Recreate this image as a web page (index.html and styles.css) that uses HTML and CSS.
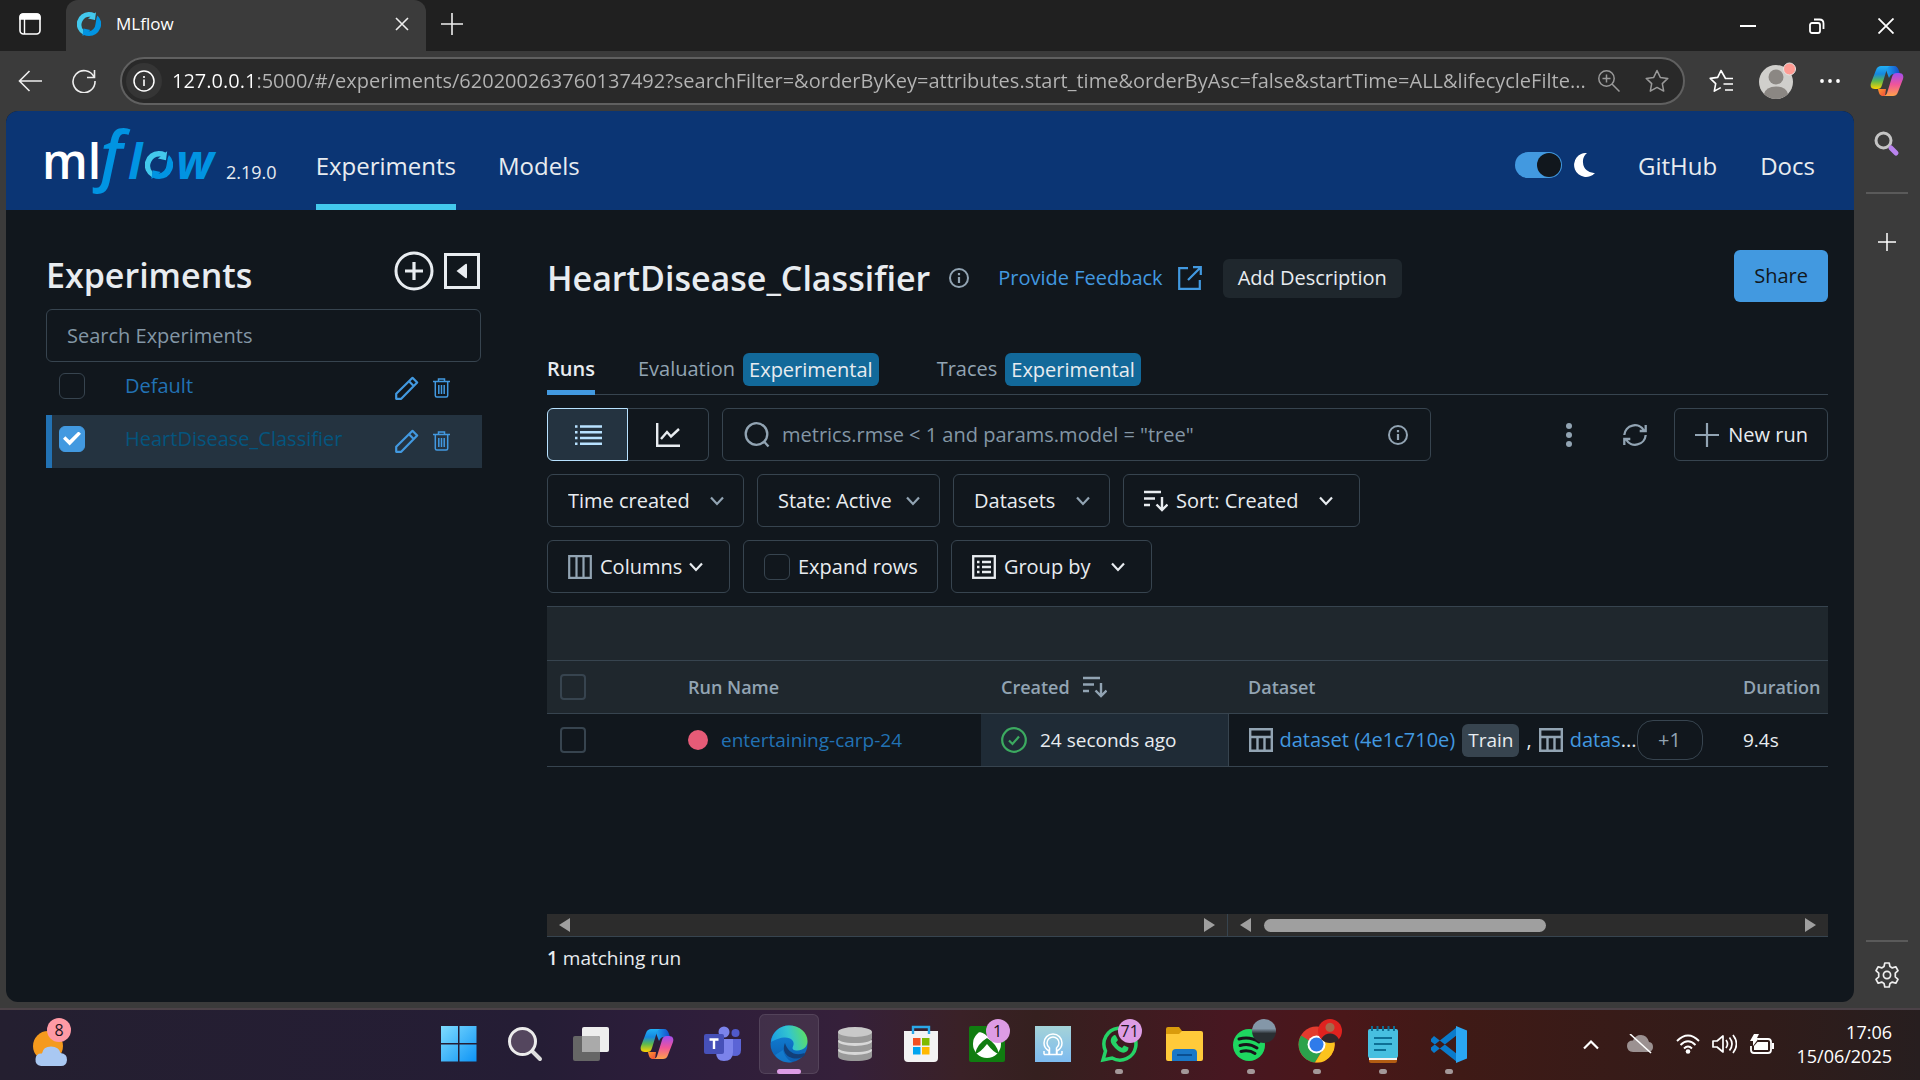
FILE: index.html
```html
<!DOCTYPE html>
<html lang="en">
<head>
<meta charset="utf-8">
<title>MLflow</title>
<link rel="stylesheet" href="styles.css">
</head>
<body>
<svg class="sprite" aria-hidden="true">
  <defs>
    <linearGradient id="copTop" x1="0" y1="0" x2="1" y2="0"><stop offset="0" stop-color="#1ea5f0"/><stop offset="1" stop-color="#1449c8"/></linearGradient>
    <linearGradient id="copLeft" x1="0" y1="0" x2="0" y2="1"><stop offset="0" stop-color="#22b0f5"/><stop offset=".35" stop-color="#1688e0"/><stop offset=".65" stop-color="#5cb84f"/><stop offset="1" stop-color="#ffd400"/></linearGradient>
    <linearGradient id="copRight" x1="0" y1="0" x2="0" y2="1"><stop offset="0" stop-color="#a04df0"/><stop offset=".5" stop-color="#f0559a"/><stop offset="1" stop-color="#ffa24a"/></linearGradient>
    <linearGradient id="copBot" x1="0" y1="0" x2="1" y2="1"><stop offset="0" stop-color="#ff9a2e"/><stop offset="1" stop-color="#f0483c"/></linearGradient>
  </defs>
  <symbol id="i-copilot" viewBox="0 0 34 32">
    <path d="M17 1h7c3 0 4 2 5 5l1 3h-6c-3 0-4 2-5 4l-3-8z" fill="url(#copTop)"/>
    <path d="M11 1h9c-3 1-3 3-4 6l-4 13c-1 3-2 4-5 4H5c-4 0-5-3-4-6L6 5c1-3 3-4 5-4z" fill="url(#copLeft)"/>
    <path d="M8 24h8l-1 7h-2c-3 0-4-2-5-7z" fill="url(#copBot)"/>
    <path d="M23 31h-9c3-1 3-3 4-6l4-13c1-3 2-4 5-4h2c4 0 5 3 4 6l-5 13c-1 3-3 4-5 4z" fill="url(#copRight)"/>
  </symbol>
  <symbol id="i-chev" viewBox="0 0 14 10"><path d="M1 1.500 7 8l6-6.500" fill="none" stroke="currentColor" stroke-width="2.200"/></symbol>
  <symbol id="i-info" viewBox="0 0 22 22"><circle cx="11" cy="11" r="9" fill="none" stroke="currentColor" stroke-width="2"/><path d="M11 10v6M11 6v2.300" stroke="currentColor" stroke-width="2.200"/></symbol>
  <symbol id="i-sort" viewBox="0 0 24 24"><path d="M0 3h17M0 9.500h11M0 16h6M18 8v13M12.500 15.500 18 21l5.500-5.500" fill="none" stroke="currentColor" stroke-width="2.400"/></symbol>
  <symbol id="i-pencil" viewBox="0 0 24 24"><path d="M1.200 22.800v-5L17.500 1.800l4.700 4.700L6.200 22.800zM14 5.300l4.700 4.700" fill="none" stroke="currentColor" stroke-width="2.200" stroke-linejoin="round"/></symbol>
  <symbol id="i-trash" viewBox="0 0 17 20"><path d="M0 3.500h17M5.500 3V1h6v2M2.300 4v13.500q0 1.500 1.500 1.500h9.400q1.500 0 1.500-1.500V4M5.800 7v9M8.500 7v9M11.200 7v9" fill="none" stroke="currentColor" stroke-width="1.500"/></symbol>
  <symbol id="i-table" viewBox="0 0 24 24"><path d="M1.200 1.200h21.600v21.600H1.200zM1 9h22M8.500 9v14M15.500 9v14" fill="none" stroke="currentColor" stroke-width="2.400"/></symbol>
  <symbol id="i-ring" viewBox="0 0 24 24">
    <path d="M6 22.500A12 12 0 0 1 12 0q3 0 5.500 1.200L19 .300l-1 7.700-7-1.500 2.500-1.700A8 8 0 0 0 6.500 18z" fill="#43c9ed"/>
    <path d="M20.500 3.500A12 12 0 0 1 12 24q-3 0-5-1l-1.500 1L6.500 16.500l7 1.500-2 1.500A8 8 0 0 0 18.500 12l1-6z" fill="#0194e2"/>
  </symbol>
</svg>

<div class="tabstrip">
  <button class="plain tabmenu" aria-label="Tab actions"><svg width="22" height="22" viewBox="0 0 22 22"><rect x="1" y="1" width="20" height="20" rx="3.500" fill="none" stroke="#fff" stroke-width="1.600"/><path d="M1 6V4q0-3 3-3h14q3 0 3 3v2zM5.500 6v15" fill="#fff" stroke="#fff" stroke-width="1.400"/></svg></button>
  <div class="tab">
    <svg width="24" height="24"><use href="#i-ring"/></svg>
    <span class="tabname">MLflow</span>
    <button class="plain" aria-label="Close tab"><svg width="14" height="14" viewBox="0 0 14 14"><path d="M1 1l12 12M13 1 1 13" stroke="#eee" stroke-width="1.600"/></svg></button>
  </div>
  <button class="plain newtab" aria-label="New tab"><svg width="22" height="22" viewBox="0 0 22 22"><path d="M11 0v22M0 11h22" stroke="#eee" stroke-width="1.600"/></svg></button>
  <div class="wincontrols">
    <button class="plain" aria-label="Minimize"><svg width="16" height="16" viewBox="0 0 16 16"><path d="M0 8h16" stroke="#fff" stroke-width="2"/></svg></button>
    <button class="plain" aria-label="Restore"><svg width="16" height="16" viewBox="0 0 16 16"><rect x="1" y="5" width="10" height="10" rx="2" fill="none" stroke="#fff" stroke-width="1.800"/><path d="M5 1.500h5.500q4 0 4 4V11" fill="none" stroke="#fff" stroke-width="1.800"/></svg></button>
    <button class="plain" aria-label="Close"><svg width="16" height="16" viewBox="0 0 16 16"><path d="M.5.500l15 15M15.500.500l-15 15" stroke="#fff" stroke-width="1.800"/></svg></button>
  </div>
</div>

<div class="navbar">
  <button class="plain" aria-label="Back"><svg width="24" height="22" viewBox="0 0 24 22"><path d="M24 11H1.500M11.500 1l-10 10 10 10" fill="none" stroke="#eee" stroke-width="1.600"/></svg></button>
  <button class="plain" aria-label="Reload"><svg width="24" height="24" viewBox="0 0 24 24"><path d="M22.500 1v7.500H15M22 8A11 11 0 1 0 23 12" fill="none" stroke="#eee" stroke-width="1.600"/></svg></button>
  <div class="omnibox">
    <button class="plain siteinfo" aria-label="Site information"><svg width="22" height="22" viewBox="0 0 22 22"><circle cx="11" cy="11" r="10" fill="none" stroke="#fff" stroke-width="1.500"/><path d="M11 9.500V16M11 6v2" stroke="#fff" stroke-width="1.600"/></svg></button>
    <input class="url" type="text" aria-label="Address" value="127.0.0.1:5000/#/experiments/620200263760137492?searchFilter=&amp;orderByKey=attributes.start_time&amp;orderByAsc=false&amp;startTime=ALL&amp;lifecycleFilte...">
    <button class="plain" aria-label="Zoom"><svg width="22" height="22" viewBox="0 0 22 22"><circle cx="8.500" cy="8.500" r="7.700" fill="none" stroke="#999" stroke-width="1.500"/><path d="M14 14l7.500 7.500M8.500 4.500v8M4.500 8.500h8" stroke="#999" stroke-width="1.500"/></svg></button>
    <button class="plain" aria-label="Favorite"><svg width="24" height="24" viewBox="0 0 24 24"><path d="M12 1.500l3.300 6.900 7.500 1-5.500 5.200 1.400 7.500-6.700-3.700-6.700 3.700 1.400-7.500L1.200 9.400l7.500-1z" fill="none" stroke="#999" stroke-width="1.500" stroke-linejoin="round"/></svg></button>
  </div>
  <div class="browsertools">
    <button class="plain" aria-label="Favorites"><svg width="25" height="24" viewBox="0 0 25 24"><path d="M24 9.500h-7.500L12 1.500 8.700 8.400l-7.500 1 5.500 5.200-1.400 7.500 6.500-3.500M14.500 15H24M16 21h8" fill="none" stroke="#fff" stroke-width="1.600" stroke-linejoin="round"/></svg></button>
    <button class="plain" aria-label="Profile"><svg width="38" height="38" viewBox="0 0 38 38"><circle cx="18" cy="20" r="17" fill="#d0cfcc"/><circle cx="18" cy="15" r="7.500" fill="#8b8783"/><path d="M6 32q2-7.500 12-7.500T30 32q-5 5-12 5T6 32" fill="#8b8783"/><circle cx="31.500" cy="7" r="6" fill="#ff9b93" stroke="#e8e4e2"/></svg></button>
    <button class="plain" aria-label="More"><svg width="20" height="6" viewBox="0 0 20 6"><g fill="#fff"><circle cx="2" cy="3" r="1.900"/><circle cx="10" cy="3" r="1.900"/><circle cx="18" cy="3" r="1.900"/></g></svg></button>
    <button class="plain" aria-label="Copilot"><svg width="34" height="32"><use href="#i-copilot"/></svg></button>
  </div>
</div>

<div class="window">
  <div class="app">
    <header class="appbar">
      <a class="logo" href="#" aria-label="MLflow home">
        <svg width="173" height="68" viewBox="0 0 173 68">
          <text class="lg-ml" x="-3" y="52">ml</text>
          <text class="lg-f" x="55" y="51">f</text>
          <text class="lg-w" x="83" y="52">l</text>
          <text class="lg-w" x="131" y="52">w</text>
          <svg x="100" y="24" width="28" height="28"><use href="#i-ring"/></svg>
        </svg>
      </a>
      <span class="version">2.19.0</span>
      <nav class="mainnav">
        <a class="active" href="#experiments">Experiments</a>
        <a href="#models">Models</a>
      </nav>
      <div class="appright">
        <label class="theme"><input type="checkbox" checked aria-label="Dark theme"><svg width="21" height="24" viewBox="0 0 21 24"><path d="M13 0A12 12 0 1 0 21 20 11 11 0 0 1 9 9.500 11 11 0 0 1 13 0z" fill="#fff"/></svg></label>
        <a href="#github">GitHub</a>
        <a href="#docs">Docs</a>
      </div>
    </header>
    <div class="appbody">
      <aside class="experiments">
        <div class="exphead">
          <h2>Experiments</h2>
          <button class="plain" aria-label="Create experiment"><svg width="40" height="40" viewBox="0 0 40 40"><circle cx="20" cy="20" r="18" fill="none" stroke="#e8ecf0" stroke-width="3"/><path d="M20 11v18M11 20h18" stroke="#e8ecf0" stroke-width="3.200"/></svg></button>
          <button class="plain" aria-label="Collapse"><svg width="36" height="36" viewBox="0 0 36 36"><rect x="1.500" y="1.500" width="33" height="33" fill="none" stroke="#e8ecf0" stroke-width="3"/><path d="M12.500 18l9-7q1.500-1 1.500 1v12q0 2-1.500 1z" fill="#e8ecf0"/></svg></button>
        </div>
        <input class="expsearch" type="text" placeholder="Search Experiments" aria-label="Search Experiments">
        <ul class="explist">
          <li>
            <input type="checkbox" class="check" aria-label="Select Default">
            <a href="#default">Default</a>
            <button class="plain" aria-label="Rename"><svg width="24" height="24"><use href="#i-pencil"/></svg></button>
            <button class="plain" aria-label="Delete"><svg width="17" height="20"><use href="#i-trash"/></svg></button>
          </li>
          <li class="selected">
            <input type="checkbox" class="check" checked aria-label="Select HeartDisease_Classifier">
            <a href="#heart">HeartDisease_Classifier</a>
            <button class="plain" aria-label="Rename"><svg width="24" height="24"><use href="#i-pencil"/></svg></button>
            <button class="plain" aria-label="Delete"><svg width="17" height="20"><use href="#i-trash"/></svg></button>
          </li>
        </ul>
      </aside>

      <main class="content">
        <div class="titlerow">
          <div class="titleleft">
            <h1>HeartDisease_Classifier</h1>
            <svg class="muted" width="22" height="22"><use href="#i-info"/></svg>
            <a class="feedback" href="#feedback">Provide Feedback <svg width="24" height="24" viewBox="0 0 24 24"><path d="M10 2.200H1.200v20.600h20.600V14M15 1.200h7.800V9M22.500 1.500 10 14" fill="none" stroke="currentColor" stroke-width="2.200"/></svg></a>
            <button class="adddesc">Add Description</button>
          </div>
          <button class="share">Share</button>
        </div>
        <nav class="tabs">
          <a class="on" href="#runs">Runs</a>
          <a href="#evaluation">Evaluation <span class="badge">Experimental</span></a>
          <a href="#traces">Traces <span class="badge">Experimental</span></a>
        </nav>
        <div class="toolbar">
          <div class="tools">
            <div class="segment">
              <button class="on" aria-label="List view"><svg width="28" height="24" viewBox="0 0 28 24"><path d="M6 3.500h22M6 9.300h22M6 15h22M6 20.800h22M1 3.500h2.500M1 9.300h2.500M1 15h2.500M1 20.800h2.500" stroke="currentColor" stroke-width="2.400"/></svg></button>
              <button aria-label="Chart view"><svg width="24" height="24" viewBox="0 0 24 24"><path d="M1.200 0v22.800H24M5 16l6-7 4 4.500L23 6" fill="none" stroke="currentColor" stroke-width="2.400"/></svg></button>
            </div>
            <div class="runsearch">
              <svg class="muted" width="26" height="26" viewBox="0 0 26 26"><circle cx="12.500" cy="12" r="10.800" fill="none" stroke="currentColor" stroke-width="2.300"/><path d="M20 19.500l4.500 5" stroke="currentColor" stroke-width="2.300"/></svg>
              <input type="text" placeholder='metrics.rmse &lt; 1 and params.model = "tree"' aria-label="Search runs">
              <svg class="muted" width="22" height="22"><use href="#i-info"/></svg>
            </div>
            <div class="toolsright">
              <button class="iconbtn" aria-label="More"><svg width="6" height="24" viewBox="0 0 6 24"><g fill="currentColor"><circle cx="3" cy="3" r="3"/><circle cx="3" cy="12" r="3"/><circle cx="3" cy="21" r="3"/></g></svg></button>
              <button class="iconbtn" aria-label="Refresh"><svg width="24" height="24" viewBox="0 0 24 24"><path d="M1.300 12A10.600 10.600 0 0 1 21 7.500M22.700 12A10.600 10.600 0 0 1 3 16.500M22.700 2v6h-6M1.300 22v-6h6" fill="none" stroke="currentColor" stroke-width="2.300"/></svg></button>
              <button class="box newrun"><svg class="muted" width="24" height="24" viewBox="0 0 24 24"><path d="M12 0v24M0 12h24" stroke="currentColor" stroke-width="2.200"/></svg>New run</button>
            </div>
          </div>
          <div class="tools">
            <label class="box"><select aria-label="Time created"><option>Time created</option></select><svg class="muted" width="14" height="10"><use href="#i-chev"/></svg></label>
            <label class="box tight"><select aria-label="State"><option>State: Active</option></select><svg class="muted" width="14" height="10"><use href="#i-chev"/></svg></label>
            <label class="box"><select aria-label="Datasets"><option>Datasets</option></select><svg class="muted" width="14" height="10"><use href="#i-chev"/></svg></label>
            <label class="box roomy"><span class="withicon"><svg width="24" height="24"><use href="#i-sort"/></svg><select aria-label="Sort"><option>Sort: Created</option></select></span><svg width="14" height="10"><use href="#i-chev"/></svg></label>
          </div>
          <div class="tools">
            <label class="box roomy columns"><span class="withicon"><svg class="muted" width="24" height="24" viewBox="0 0 24 24"><path d="M1.200 1.200h21.600v21.600H1.200zM8.500 1v22M15.500 1v22" fill="none" stroke="currentColor" stroke-width="2.200"/></svg><select aria-label="Columns"><option>Columns</option></select></span><svg width="14" height="10"><use href="#i-chev"/></svg></label>
            <label class="box expand"><input type="checkbox" class="check">Expand rows</label>
            <label class="box roomy"><span class="withicon"><svg width="24" height="24" viewBox="0 0 24 24"><rect x="1.200" y="1.200" width="21.600" height="21.600" fill="none" stroke="currentColor" stroke-width="2.300"/><path d="M5 7h2.500M5 12h2.500M5 17h2.500M10 7h9M10 12h9M10 17h9" stroke="currentColor" stroke-width="2.300"/></svg><select aria-label="Group by"><option>Group by</option></select></span><svg width="14" height="10"><use href="#i-chev"/></svg></label>
          </div>
        </div>

        <div class="grid">
          <table>
            <colgroup><col class="c-check"><col class="c-name"><col class="c-created"><col class="c-data"><col></colgroup>
            <thead>
              <tr class="group"><td colspan="5"></td></tr>
              <tr>
                <th class="sel"><input type="checkbox" class="check" aria-label="Select all runs"></th>
                <th>Run Name</th>
                <th><span class="sorted">Created <svg width="24" height="24"><use href="#i-sort"/></svg></span></th>
                <th>Dataset</th>
                <th>Duration</th>
              </tr>
            </thead>
            <tbody>
              <tr>
                <td class="sel"><input type="checkbox" class="check" aria-label="Select run"></td>
                <td><span class="run"><i class="dot"></i><a href="#run">entertaining-carp-24</a></span></td>
                <td class="created"><span class="run"><svg width="26" height="26" viewBox="0 0 26 26"><circle cx="13" cy="13" r="11.800" fill="none" stroke="#3caa60" stroke-width="2.200"/><path d="M8 13.500l3.500 3.500L18 9.500" fill="none" stroke="#3caa60" stroke-width="2.200"/></svg>24 seconds ago</span></td>
                <td><div class="datasets">
                  <svg class="muted" width="24" height="24"><use href="#i-table"/></svg>
                  <a href="#ds1">dataset (4e1c710e)</a>
                  <span class="train">Train</span>
                  <span>,</span>
                  <svg class="muted" width="24" height="24"><use href="#i-table"/></svg>
                  <span><a href="#ds2">datas</a>...</span>
                  <button class="more">+1</button>
                </div></td>
                <td>9.4s</td>
              </tr>
            </tbody>
          </table>
          <div class="scrolls">
            <div class="scroll left"><i class="arr prev"></i><i class="arr next"></i></div>
            <div class="scroll"><i class="arr prev"></i><i class="thumb"></i><i class="arr next"></i></div>
          </div>
        </div>
        <p class="count"><b>1</b> matching run</p>
      </main>
    </div>
  </div>
  <aside class="rail">
    <button class="plain" aria-label="Search"><svg width="26" height="26" viewBox="0 0 26 26"><circle cx="9.500" cy="9.500" r="7.500" fill="none" stroke="#c4c4c4" stroke-width="3"/><path d="M17 17l5 5" stroke="#b983ee" stroke-width="5" stroke-linecap="round"/></svg></button>
    <hr>
    <button class="plain" aria-label="Add"><svg width="18" height="18" viewBox="0 0 18 18"><path d="M9 0v18M0 9h18" stroke="#fff" stroke-width="1.500"/></svg></button>
    <hr class="low">
    <button class="plain" aria-label="Settings"><svg width="26" height="26" viewBox="0 0 26 26"><path d="M10.800 1h4.400l.8 3.600 2.300 1.300 3.500-1.100 2.200 3.800-2.700 2.500v3.800l2.700 2.500-2.200 3.800-3.500-1.100-2.300 1.300-.8 3.600h-4.400L10 21.400l-2.300-1.300-3.500 1.100L2 17.400l2.700-2.500v-3.800L2 8.600l2.200-3.800 3.500 1.100L10 4.600z" fill="none" stroke="#eee" stroke-width="1.700" stroke-linejoin="round"/><circle cx="13" cy="13" r="3.600" fill="none" stroke="#eee" stroke-width="1.700"/></svg></button>
  </aside>
</div>

<footer class="taskbar">
  <button class="plain weather" aria-label="Weather">
    <svg width="38" height="46" viewBox="0 0 38 46"><circle cx="15" cy="25" r="15" fill="#f59a1d"/><path d="M8 45q-6-1-5.500-7T9 32.500q1-7 9-7t9.500 6.500q7 1 6.500 7t-6 6z" fill="#a9c8f2"/></svg>
    <span class="pill pink">8</span>
  </button>
  <div class="apps">
    <button class="task" aria-label="Start"><svg width="36" height="36" viewBox="0 0 36 36"><defs><linearGradient id="win" gradientUnits="userSpaceOnUse" x1="0" y1="0" x2="36" y2="36"><stop offset="0" stop-color="#7fdcff"/><stop offset="1" stop-color="#0c93f5"/></linearGradient></defs><path d="M0 0h17v17H0zM18.500 0h17v17h-17zM0 18.500h17v17H0zM18.500 18.500h17v17h-17z" fill="url(#win)"/></svg></button>
    <button class="task" aria-label="Search"><svg width="36" height="36" viewBox="0 0 36 36"><path d="M25 25l8 8" stroke="#ddd" stroke-width="4" stroke-linecap="round"/><circle cx="15.500" cy="15.500" r="13" fill="#54465e" stroke="#ececec" stroke-width="3"/></svg></button>
    <button class="task" aria-label="Task view"><svg width="38" height="36" viewBox="0 0 38 36"><rect x="10" y="1" width="27" height="25" rx="2" fill="#eee"/><rect x="1" y="10" width="27" height="25" rx="2" fill="#666"/><path d="M10 10h16q2 0 2 2v14H10z" fill="#aaa"/></svg></button>
    <button class="task" aria-label="Copilot"><svg width="34" height="32"><use href="#i-copilot"/></svg></button>
    <button class="task" aria-label="Teams"><svg width="38" height="36" viewBox="0 0 38 36"><circle cx="20" cy="6" r="5.500" fill="#7b83eb"/><circle cx="31.500" cy="7" r="4" fill="#5059c9"/><path d="M24 13h13v11q0 6-6 6-5 0-7-4z" fill="#5b64d6"/><path d="M12 13h17v13q0 9-9 9-8 0-8-9z" fill="#7b83eb"/><rect y="8" width="20" height="20" rx="2" fill="#4650b8"/><path d="M5.500 13.500h9M10 13.500V23" stroke="#fff" stroke-width="2.400"/></svg></button>
    <button class="task current" aria-label="Edge"><svg width="38" height="38" viewBox="0 0 38 38"><defs><linearGradient id="edgeA" x1="0" y1=".5" x2="1" y2=".3"><stop offset="0" stop-color="#1b9de2"/><stop offset=".5" stop-color="#32c5d0"/><stop offset="1" stop-color="#5fe060"/></linearGradient><linearGradient id="edgeB" x1="0" y1="0" x2="0" y2="1"><stop offset="0" stop-color="#1387dc"/><stop offset="1" stop-color="#0b5db0"/></linearGradient></defs><circle cx="19" cy="19" r="18.500" fill="url(#edgeB)"/><path d="M1 17C2 7 10 .5 19 .5 30 .5 37.500 8 37.500 16c0 6-4.500 9.500-10 9.500-4 0-6-1.500-4.500-4 2.500-5-2-9.500-9-9C7 13 1.500 17 1 17z" fill="url(#edgeA)"/><path d="M15 18c-4 9 3 16 12 15.500 3 0 5-1 7-2.500 2-1.500 1-3.500-1-2.500-9 3-16-3-18-10.500z" fill="#123f78"/><path d="M13 25c1 5 5 11 10 12-8 2-15-2-18-7z" fill="#1a90e0" opacity=".5"/></svg></button>
    <button class="task" aria-label="Database"><svg width="36" height="36" viewBox="0 0 36 36"><g fill="#999"><path d="M1 24v6q0 5 17 5t17-5v-6z"/><ellipse cx="18" cy="24" rx="17" ry="5" fill="#d8d8d8"/><path d="M1 15v6q0 5 17 5t17-5v-6z"/><ellipse cx="18" cy="15" rx="17" ry="5" fill="#d8d8d8"/><path d="M1 6v6q0 5 17 5t17-5V6z"/><ellipse cx="18" cy="6" rx="17" ry="5" fill="#c9c9c9"/></g></svg></button>
    <button class="task" aria-label="Store"><svg width="36" height="38" viewBox="0 0 36 38"><path d="M10 9V2h16v7" fill="none" stroke="#2aa8e8" stroke-width="2.400"/><path d="M1 6h34v27q0 4-4 4H5q-4 0-4-4z" fill="#f3f3f3"/><path d="M10 6v3M26 6v3" stroke="#2aa8e8" stroke-width="2.400"/><path d="M10 13h7.500v7.500H10z" fill="#f25022"/><path d="M19 13h7.500v7.500H19z" fill="#7fba00"/><path d="M10 22h7.500v7.500H10z" fill="#00a4ef"/><path d="M19 22h7.500v7.500H19z" fill="#ffb900"/></svg></button>
    <button class="task" aria-label="Xbox"><svg width="36" height="36" viewBox="0 0 36 36"><rect width="36" height="36" rx="2" fill="#107c10"/><circle cx="18" cy="18" r="14" fill="#fff"/><path d="M9 6q5 0 9 4 4-4 9-4-5-3-9-3T9 6M6 28q2-10 12-16 10 6 12 16-5-1-12-10Q11 27 6 28" fill="#107c10"/></svg><span class="pill">1</span></button>
    <button class="task" aria-label="Assistant"><svg width="36" height="36" viewBox="0 0 36 36"><defs><linearGradient id="asst" x1="0" y1="0" x2="0" y2="1"><stop offset="0" stop-color="#a5d3d8"/><stop offset="1" stop-color="#7dbbf0"/></linearGradient></defs><rect width="36" height="36" fill="url(#asst)"/><path d="M9 28.500h5v-3.500q-5-3-5-8a9 9 0 0 1 18 0q0 5-5 8v3.500h5M9 28.500v-3.500M27 28.500v-3.500M14.500 22q-2.500-2-2.500-5a6 6 0 0 1 12 0q0 3-2.500 5v6.500h-7z" fill="none" stroke="#fff" stroke-width="1.500"/></svg></button>
    <button class="task open" aria-label="WhatsApp"><svg width="38" height="38" viewBox="0 0 38 38"><path d="M3 35l2.500-9A16 16 0 1 1 12 33z" fill="none" stroke="#25d366" stroke-width="3.500"/><path d="M13 11q2-2 3 0l2 4-2 2.500q2 4 6 5.500l2-2.500 4.500 2q0 4-4 5-4 1-9.500-4.500T11 14q.5-2 2-3" fill="#25d366"/></svg><span class="pill">71</span></button>
    <button class="task open" aria-label="Explorer"><svg width="37" height="36" viewBox="0 0 37 36"><rect y="5" width="37" height="30" rx="2" fill="#ffca3a"/><path d="M0 8V3q0-2 2-2h11l3 4-3 3z" fill="#d99b0c"/><path d="M6 35V27q0-4 4-4h17q4 0 4 4v8z" fill="#1a78c8"/><path d="M11 29h15" stroke="#0a4f92" stroke-width="2"/></svg></button>
    <button class="task open" aria-label="Spotify"><svg width="36" height="36" viewBox="0 0 36 36"><circle cx="16" cy="19" r="16" fill="#1ed760"/><path d="M6 13q11-3 20 3M7 19.500q9-3 17 2.500M8 25.500q8-2 14 2" fill="none" stroke="#18131a" stroke-width="3" stroke-linecap="round"/></svg><i class="face grey"></i></button>
    <button class="task open" aria-label="Chrome"><svg width="37" height="37" viewBox="0 0 37 37"><circle cx="18.500" cy="18.500" r="18" fill="#e33b2e"/><path d="M3 9.500a18 18 0 0 0 14 27l8-13.500-6.500-4z" fill="#2ba24c"/><path d="M35 11a18 18 0 0 1-18 25.500L26 22l-1-11z" fill="#fcc31e"/><circle cx="18.500" cy="18.500" r="9" fill="#fff"/><circle cx="18.500" cy="18.500" r="7" fill="#2f7bea"/></svg><i class="face red"></i></button>
    <button class="task open" aria-label="Notepad"><svg width="30" height="37" viewBox="0 0 30 37"><path d="M1 32h28v3q0 2-2 2H3q-2 0-2-2z" fill="#b35c12"/><path d="M1 30h28v4H1z" fill="#f3f3f3"/><rect y="3" width="30" height="29" rx="2" fill="#47bfe0"/><path d="M4 0v5M9.500 0v5M15 0v5M20.500 0v5M26 0v5M6 12h18M6 18h18M6 24h12" stroke="#0d6f95" stroke-width="2"/></svg></button>
    <button class="task open" aria-label="VS Code"><svg width="37" height="37" viewBox="0 0 37 37"><path d="M1 13l3-3 23 18v8L1 15.500zM1 24l3 3 23-18V1L1 21.500z" fill="#0a7bcb"/><path d="M26 0l11 4.500v28L26 37z" fill="#2aa6f2"/></svg></button>
  </div>
  <div class="tray">
    <svg width="18" height="11" viewBox="0 0 18 11"><path d="M2 9.500l7-7 7 7" fill="none" stroke="#fff" stroke-width="2.200"/></svg>
    <svg class="cloud" width="26" height="20" viewBox="0 0 26 20"><path d="M6 18q-6-.5-6-6t6-5.500Q8 1 14 1t8 7q4 .5 4 5t-5 5z" fill="#9b9191"/><path d="M3 0l21 19" stroke="#fff" stroke-width="1.600"/></svg>
    <svg width="24" height="20" viewBox="0 0 24 20"><path d="M1 7Q12-4 23 7M4.500 11q7.500-7.500 15 0M8 14.500q4-4 8 0" fill="none" stroke="#fff" stroke-width="1.900"/><circle cx="12" cy="17.500" r="2.300" fill="#fff"/></svg>
    <svg width="25" height="20" viewBox="0 0 25 20"><path d="M1 7h4l6-5v16l-6-5H1zM14 6q3 4 0 8M17.500 3.500q5 6.500 0 13M21 1q7 9 0 18" fill="none" stroke="#fff" stroke-width="1.700" stroke-linejoin="round"/></svg>
    <svg width="25" height="21" viewBox="0 0 25 21"><path d="M9 5h10q3 0 3 3v8q0 3-3 3H5q-3 0-3-3v-4" fill="none" stroke="#fff" stroke-width="1.800"/><path d="M8.500 8H19v8H5v-4zM23 9h2v6h-2zM5 0h5L8 4h2l-6 8V7H1z" fill="#fff"/></svg>
    <div class="clock"><span>17:06</span><span>15/06/2025</span></div>
  </div>
</footer>
</body>
</html>
```
FILE: styles.css
```css
* { box-sizing: border-box; }
body {
  margin: 0;
  min-height: 100vh;
  display: flex;
  flex-direction: column;
  background: #3b3b3b;
  color: #e8ecf0;
  font: 20px/28px "Open Sans", "Noto Sans", sans-serif;
}
button, input, select { font: inherit; color: inherit; margin: 0; }
svg { display: block; flex: none; }
a { color: inherit; text-decoration: none; }
h1, h2, p, ul { margin: 0; padding: 0; }
.sprite { position: absolute; width: 0; height: 0; }
.plain {
  border: 0; background: none; padding: 0;
  display: flex; align-items: center; justify-content: center; flex: none;
}
.muted { color: #92a4b3; }

/* Browser chrome */
.tabstrip { display: flex; height: 51px; background: #202020; }
.tabmenu { width: 60px; height: 48px; }
.tab {
  width: 360px; margin-left: 6px; padding: 0 17px 3px 11px;
  display: flex; align-items: center;
  background: #3b3b3b; border-radius: 12px 12px 0 0;
  font-size: 17px;
}
.tabname { flex: 1; margin-left: 15px; color: #fff; }
.newtab { width: 52px; height: 48px; }
.wincontrols { display: flex; margin-left: auto; }
.wincontrols .plain { width: 69px; }

.navbar { display: flex; align-items: center; height: 60px; padding: 0 16px 0 18px; }
.navbar > .plain + .plain { margin-left: 30px; }
.omnibox {
  flex: 1; min-width: 0; height: 48px; margin-left: 24px; padding: 0 14px 0 4px;
  display: flex; align-items: center;
  border: 2px solid #606060; border-radius: 24px; background: #292929;
}
.siteinfo { width: 36px; height: 36px; border-radius: 18px; background: #353535; }
.url {
  flex: 1; min-width: 0; margin: 0 6px 0 10px; padding: 0; border: 0; outline: 0;
  color: #b4b4b4; text-overflow: ellipsis;
  background: linear-gradient(90deg, #fff 84px, #b4b4b4 84px);
  -webkit-background-clip: text; background-clip: text;
  -webkit-text-fill-color: transparent;
}
.omnibox .plain:last-child { margin-left: 25px; }
.browsertools { display: flex; align-items: center; gap: 24px; margin-left: 24px; }
.browsertools .plain:last-child { margin-left: 6px; }

.window { flex: 1; display: flex; padding-left: 6px; }
.rail { width: 66px; flex: none; display: flex; flex-direction: column; align-items: center; padding: 20px 0; }
.rail hr { width: 42px; height: 2px; margin: 35px 0 39px; border: 0; background: #5a5a5a; }
.rail .low { margin: auto 0 20px; }

/* Application */
.app {
  flex: 1; min-width: 0; margin-bottom: 6px; overflow: hidden;
  display: flex; flex-direction: column;
  background: #11171d; border-radius: 12px;
}
.appbar {
  display: flex; height: 99px; padding: 0 39px;
  background: #0b3574; color: #e8ecf0; font-size: 24px; line-height: 34px;
}
.logo { padding-top: 16px; }
.logo > svg { overflow: visible; }
.lg-ml, .lg-w { font: 600 48px "Open Sans", sans-serif; fill: #fff; }
.lg-w { font-weight: 700; font-style: italic; fill: #0194e2; }
.lg-f { font: italic 600 66px "Open Sans", sans-serif; fill: #0194e2; }
.version { padding: 44px 0 0 8px; font-size: 18px; }
.mainnav { display: flex; gap: 42px; margin-left: 39px; }
.mainnav a { padding-top: 38px; border-bottom: 6px solid transparent; }
.mainnav .active { border-color: #43c9ed; }
.appright { display: flex; gap: 43px; margin-left: auto; padding-top: 38px; }
.theme { display: flex; gap: 12px; align-items: center; height: 31px; }
.theme input {
  appearance: none; width: 47px; height: 26px; border-radius: 13px;
  background: #4299e0; display: flex; justify-content: flex-end; padding: 1px;
}
.theme input::before { content: ""; width: 24px; height: 24px; border-radius: 12px; background: #11171d; }

.appbody { flex: 1; display: flex; padding: 40px 26px 0 40px; }
.experiments { width: 436px; flex: none; }
.exphead { display: flex; height: 50px; margin-bottom: 9px; gap: 10px; padding-right: 2px; }
.exphead h2 { flex: 1; }
h1, h2 { font-size: 34px; line-height: 50px; font-weight: 600; }
.exphead .plain { height: 42px; }
.expsearch {
  width: 435px; height: 53px; padding: 0 20px; display: block;
  border: 1px solid #37444f; border-radius: 6px; background: none; outline: 0;
}
::placeholder { color: #8396a5; opacity: 1; }
.explist { list-style: none; }
.explist li {
  display: flex; align-items: center; height: 53px;
  padding: 0 32px 6px 13px; color: #4299e0;
}
.explist a { flex: 1; margin-left: 40px; color: #2272b4; }
.explist .plain { margin: 4px 0 0 14px; }
.explist .selected { background: #243340; border-left: 6px solid #2272b4; padding-left: 7px; }
.explist .selected a { color: #04557e; }
.check {
  appearance: none; width: 26px; height: 26px; flex: none;
  display: flex; align-items: center; justify-content: center;
  border: 1px solid #37444f; border-radius: 6px; background: none;
}
.check:checked { background: #4299e0; border-color: #4299e0; }
.check:checked::before {
  content: ""; width: 18px; height: 14px; background: #fff;
  clip-path: polygon(0 52%, 13% 34%, 36% 62%, 86% 0, 100% 16%, 37% 100%);
}

.content { flex: 1; min-width: 0; margin-left: 65px; display: flex; flex-direction: column; }
.titlerow { display: flex; justify-content: space-between; align-items: flex-start; }
.titleleft { display: flex; align-items: center; height: 56px; }
.titleleft .muted { margin: 0 28px 0 18px; }
.feedback { display: flex; align-items: center; gap: 15px; color: #4299e0; }
.adddesc { height: 39px; margin-left: 21px; padding: 0 15px; border: 0; border-radius: 6px; background: #1f272d; }
.share { height: 52px; padding: 0 20px; border: 0; border-radius: 6px; background: #4299e0; color: #11171d; }
.tabs { display: flex; height: 50px; margin-top: 39px; gap: 43px; border-bottom: 1px solid #37444f; }
.tabs a { display: flex; align-items: center; height: 50px; padding-bottom: 2px; gap: 8px; color: #92a4b3; }
.tabs a + a + a { margin-left: 15px; }
.tabs .on { color: #e8ecf0; font-weight: 600; box-shadow: inset 0 -5px #4299e0; }
.badge { height: 33px; padding: 0 6px; line-height: 33px; border-radius: 6px; background: #12699a; color: #e8ecf0; }

.toolbar { display: flex; flex-direction: column; gap: 13px; margin: 13px 0; }
.tools { display: flex; gap: 13px; }
.segment { display: flex; }
.segment button {
  width: 81px; height: 53px; padding: 0; display: flex; align-items: center; justify-content: center;
  border: 1px solid #37444f; border-left: 0; border-radius: 0 6px 6px 0; background: none;
}
.segment .on { border: 1px solid #b8e2ff; border-radius: 6px 0 0 6px; background: #243340; color: #b8e2ff; }
.runsearch, .box { height: 53px; display: flex; align-items: center; border: 1px solid #37444f; border-radius: 6px; background: none; }
.runsearch { flex: 0 1 709px; padding: 0 21px; gap: 12px; }
.runsearch input { flex: 1; min-width: 0; padding: 0; border: 0; outline: 0; background: none; }
.toolsright { display: flex; gap: 13px; margin-left: auto; color: #92a4b3; }
.iconbtn { width: 53px; height: 53px; padding: 0; border: 0; background: none; display: flex; align-items: center; justify-content: center; }
.box { padding: 0 19px 0 20px; gap: 20px; }
.tight { gap: 14px; }
.newrun { gap: 9px; color: #e8ecf0; }
.withicon { display: flex; align-items: center; gap: 8px; }
.roomy { padding-right: 26px; }
.columns { gap: 6px; }
.expand { gap: 8px; }
select { appearance: none; border: 0; padding: 0; background: none; outline: 0; }

.grid { flex: 1; display: flex; flex-direction: column; justify-content: space-between; overflow: hidden; border-bottom: 1px solid #37444f; }
table { width: 100%; table-layout: fixed; border-collapse: collapse; text-align: left; font-size: 19px; white-space: nowrap; }
.c-check { width: 121px; }
.c-name { width: 313px; }
.c-created { width: 247px; }
.c-data { width: 495px; }
thead { background: #1f272d; color: #92a4b3; font-size: 18px; }
.group td { height: 54px; border-top: 1px solid #37444f; }
th, td { height: 53px; padding: 0 0 0 20px; border-bottom: 1px solid #37444f; }
th { font-weight: 600; }
.sel { padding-left: 13px; }
.sel .check { border-width: 2px; border-radius: 4px; }
.sorted, .run, .datasets { display: flex; align-items: center; gap: 13px; }
.run a { color: #2272b4; }
.dot { width: 20px; height: 20px; border-radius: 10px; background: #e65b77; }
.created { background: #1f2b36; border-right: 1px solid #37444f; }
.datasets { gap: 7px; font-size: 20px; }
.datasets a { color: #4299e0; }
.train { height: 33px; padding: 0 6px; line-height: 33px; font-size: 19px; border-radius: 6px; background: #37444f; }
.more { width: 66px; height: 40px; margin-left: -7px; border: 1px solid #37444f; border-radius: 16px; background: none; color: #92a4b3; padding: 0; }
.scrolls { display: flex; }
.scroll { flex: 1; display: flex; align-items: center; height: 22px; padding: 0 12px; background: #2c2c2c; }
.scroll.left { flex: 0 0 681px; border-right: 1px solid #37444f; }
.arr { width: 11px; height: 14px; background: #9f9f9f; }
.prev { clip-path: polygon(0 50%, 100% 0, 100% 100%); }
.next { margin-left: auto; clip-path: polygon(100% 50%, 0 0, 0 100%); }
.thumb { width: 282px; height: 13px; margin-left: 13px; border-radius: 7px; background: #9f9f9f; }
.count { height: 42px; line-height: 42px; margin-bottom: 23px; font-size: 19px; }
.count b { font-weight: 600; }

/* Desktop taskbar */
.taskbar {
  height: 72px; padding: 0 28px 2px 15px;
  display: grid; grid-template-columns: 1fr auto 1fr; align-items: center;
  border-top: 2px solid #4c4248;
  background: linear-gradient(90deg, #241f30 0, #251d35 28%, #2c1d3a 34%, #35203a 44%, #3a2127 50%, #35201f 54%, #471721 64%, #4a1719 70%, #3f1a16 76%, #301c1a 92%, #271e1f 100%);
}
.weather { position: relative; width: 38px; height: 46px; margin-left: 18px; }
.apps { display: flex; gap: 6px; }
.task {
  position: relative; width: 60px; height: 60px; padding: 0; border: 0; border-radius: 6px; background: none;
  display: flex; align-items: center; justify-content: center;
}
.current { background: #ffffff14; box-shadow: inset 0 0 0 1px #ffffff18; }
.open::after, .current::after {
  content: ""; position: absolute; bottom: 0; left: 26px; width: 8px; height: 5px; border-radius: 3px; background: #a39899;
}
.current::after { left: 18px; width: 24px; background: #dd9ce5; }
.pill {
  position: absolute; top: 5px; left: 29px; min-width: 24px; height: 24px; padding: 0 3px;
  border-radius: 12px; background: #dd9ce5; color: #1c1420; font-size: 16px; line-height: 24px; text-align: center;
}
.pink { top: -3px; left: 14px; background: #ff9aa5; }
.face { position: absolute; top: 5px; left: 31px; width: 24px; height: 24px; border-radius: 12px; }
.grey { background: linear-gradient(#8497a8 40%, #2a2f33 60%); }
.red { background: radial-gradient(circle at 50% 35%, #a8684c 4px, transparent 5px), radial-gradient(circle at 50% 100%, #33262a 9px, #e0221f 10px); }
.tray { display: flex; align-items: center; justify-content: flex-end; }
.cloud { margin: 0 23px 0 27px; }
.tray svg + svg + svg + svg { margin-left: 12px; }
.clock { display: flex; flex-direction: column; align-items: flex-end; margin-left: 22px; font-size: 18px; line-height: 24px; color: #fff; }
```
